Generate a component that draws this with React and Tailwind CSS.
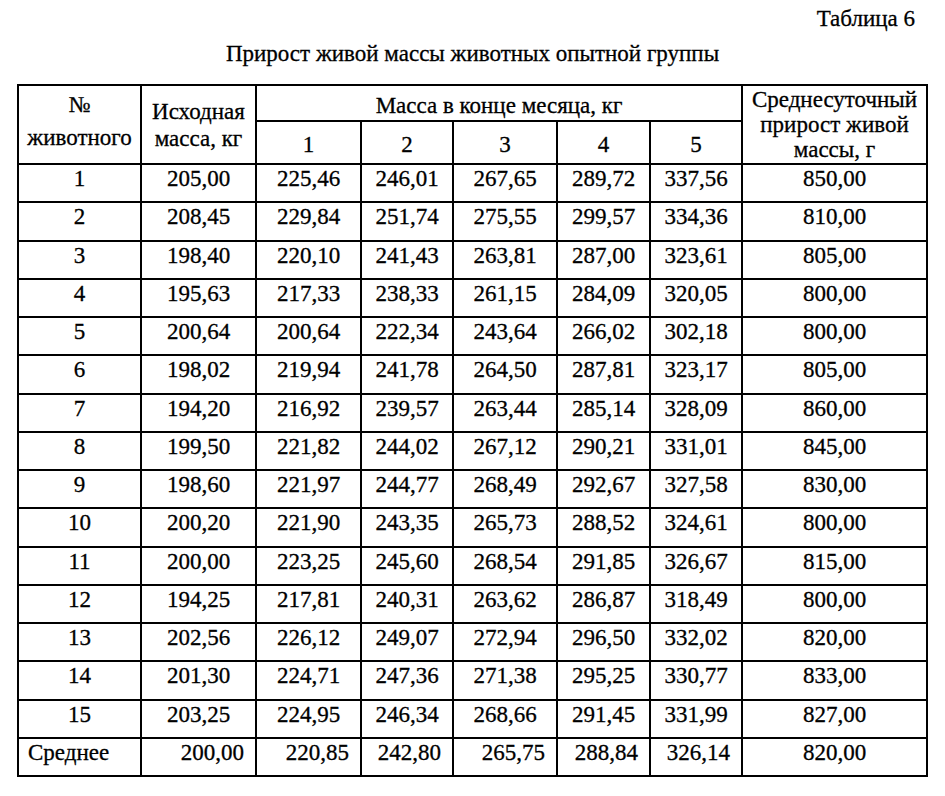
import React from 'react';

const rows = [
  ['1', '205,00', '225,46', '246,01', '267,65', '289,72', '337,56', '850,00'],
  ['2', '208,45', '229,84', '251,74', '275,55', '299,57', '334,36', '810,00'],
  ['3', '198,40', '220,10', '241,43', '263,81', '287,00', '323,61', '805,00'],
  ['4', '195,63', '217,33', '238,33', '261,15', '284,09', '320,05', '800,00'],
  ['5', '200,64', '200,64', '222,34', '243,64', '266,02', '302,18', '800,00'],
  ['6', '198,02', '219,94', '241,78', '264,50', '287,81', '323,17', '805,00'],
  ['7', '194,20', '216,92', '239,57', '263,44', '285,14', '328,09', '860,00'],
  ['8', '199,50', '221,82', '244,02', '267,12', '290,21', '331,01', '845,00'],
  ['9', '198,60', '221,97', '244,77', '268,49', '292,67', '327,58', '830,00'],
  ['10', '200,20', '221,90', '243,35', '265,73', '288,52', '324,61', '800,00'],
  ['11', '200,00', '223,25', '245,60', '268,54', '291,85', '326,67', '815,00'],
  ['12', '194,25', '217,81', '240,31', '263,62', '286,87', '318,49', '800,00'],
  ['13', '202,56', '226,12', '249,07', '272,94', '296,50', '332,02', '820,00'],
  ['14', '201,30', '224,71', '247,36', '271,38', '295,25', '330,77', '833,00'],
  ['15', '203,25', '224,95', '246,34', '268,66', '291,45', '331,99', '827,00'],
];

const average = ['200,00', '220,85', '242,80', '265,75', '288,84', '326,14'];

const cell = 'border-2 border-black align-top leading-[28px] h-[38.25px] p-0';

export default function App() {
  return (
    <div className="w-[945px] h-[796px] bg-white text-black font-['Liberation_Serif','Times_New_Roman',serif] text-[23px] [-webkit-text-stroke:0.3px_black]">
      <div className="pt-[5px] pr-[30px] text-right leading-[28px]">Таблица 6</div>
      <div className="mt-[7px] text-center leading-[28px]">Прирост живой массы животных опытной группы</div>

      <table className="mt-[16px] ml-[17px] w-[909px] border-collapse table-fixed">
        <colgroup>
          <col className="w-[123px]" />
          <col className="w-[115px]" />
          <col className="w-[105px]" />
          <col className="w-[92px]" />
          <col className="w-[104px]" />
          <col className="w-[93px]" />
          <col className="w-[92px]" />
          <col className="w-[185px]" />
        </colgroup>
        <thead>
          <tr className="h-[36px]">
            <th rowSpan={2} className="border-2 border-black align-top p-0 font-normal leading-[26px]">
              <div className="pt-[6px]">№</div>
              <div className="mt-[7px]">животного</div>
            </th>
            <th rowSpan={2} className="border-2 border-black align-top p-0 font-normal leading-[27px]">
              <div className="pt-[12px]">Исходная</div>
              <div>масса, кг</div>
            </th>
            <th colSpan={5} className="border-2 border-black align-top p-0 font-normal leading-[26px]">
              <div className="pt-[7px]">Масса в конце месяца, кг</div>
            </th>
            <th rowSpan={2} className="border-2 border-black align-top p-0 font-normal leading-[25px]">
              <div className="pt-[1px]">Среднесуточный</div>
              <div>прирост живой</div>
              <div>массы, г</div>
            </th>
          </tr>
          <tr className="h-[43px]">
            {['1', '2', '3', '4', '5'].map((n) => (
              <th key={n} className="border-2 border-black align-top p-0 font-normal leading-[26px]">
                <div className="pt-[10px]">{n}</div>
              </th>
            ))}
          </tr>
        </thead>
        <tbody>
          {rows.map((r) => (
            <tr key={r[0]}>
              {r.map((v, i) => (
                <td key={i} className={`${cell} text-center`}>
                  {v}
                </td>
              ))}
            </tr>
          ))}
          <tr>
            <td className={`${cell} text-left pl-[9px]`}>Среднее</td>
            {average.map((v, i) => (
              <td key={i} className={`${cell} text-right pr-[11px]`}>
                {v}
              </td>
            ))}
            <td className={`${cell} text-center`}>820,00</td>
          </tr>
        </tbody>
      </table>
    </div>
  );
}
